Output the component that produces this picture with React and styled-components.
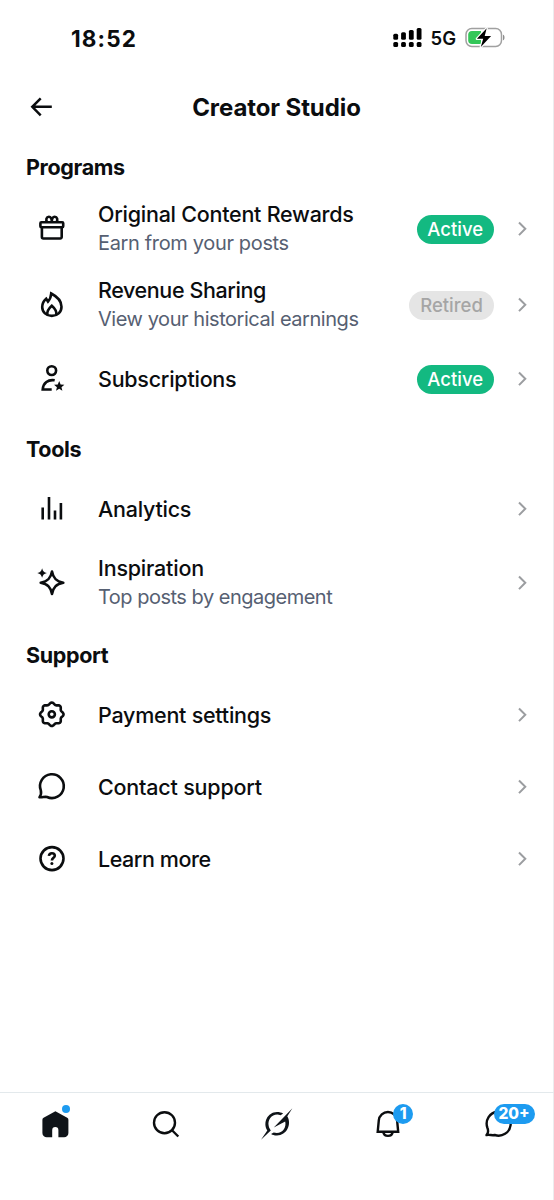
import styled, { createGlobalStyle } from 'styled-components'

const GlobalStyle = createGlobalStyle`
    *{
        box-sizing: border-box;
    }
    body{
        margin: 0;
        background: #fff;
        color: #0b0d0f;
        font-family: Inter, 'Liberation Sans', sans-serif;
    }
    svg{
        display: block;
        overflow: visible;
    }
`

const Screen = styled.div`
    display: flex;
    flex-direction: column;
    width: 554px;
    height: 1200px;
    border-right: 1px solid #ececee;
    background: #fff;
`

const StatusBar = styled.header`
    display: flex;
    align-items: center;
    justify-content: space-between;
    block-size: 76px;
    padding: 0 48px 0 71px;
`

const Clock = styled.span`
    font-size: 22.5px;
    font-weight: 700;
    letter-spacing: 1.1px;
`

const StatusIcons = styled.div`
    display: flex;
    align-items: center;
    gap: 9px;
    font-size: 18.5px;
    font-weight: 600;
`

const TitleBar = styled.div`
    display: grid;
    grid-template-columns: 32px 1fr 32px;
    align-items: center;
    block-size: 62px;
    padding: 0 25px;
    h1{
        margin: 0;
        font-size: 24px;
        font-weight: 700;
        text-align: center;
        letter-spacing: -0.1px;
    }
`

const Content = styled.main`
    flex: 1;
    padding-top: 1px;
`

const SectionTitle = styled.h2`
    margin: 0;
    padding: ${({ $first }) => ($first ? 12 : 18)}px 26px 8px;
    font-size: 21.5px;
    font-weight: 700;
    line-height: 32px;
    letter-spacing: -0.35px;
`

const Row = styled.div`
    display: flex;
    align-items: center;
    block-size: ${({ $tall }) => ($tall ? 76 : 72)}px;
    padding: 0 26px 0 36px;
`

const Labels = styled.div`
    display: flex;
    flex-direction: column;
    flex: 1;
    margin-left: 30px;
    white-space: nowrap;
`

const Label = styled.span`
    font-size: 21.5px;
    font-weight: 500;
    line-height: 29px;
    letter-spacing: ${({ $spacing }) => $spacing ?? -0.25}px;
`

const Detail = styled.span`
    color: #566072;
    font-size: 20px;
    line-height: 29px;
    letter-spacing: ${({ $spacing }) => $spacing ?? -0.45}px;
`

const Pill = styled.span`
    display: flex;
    align-items: center;
    justify-content: center;
    inline-size: ${({ $retired }) => ($retired ? 85 : 77.5)}px;
    block-size: 29px;
    margin-right: 23px;
    border-radius: 15px;
    background: ${({ $retired }) => ($retired ? '#e5e5e5' : '#13b981')};
    color: ${({ $retired }) => ($retired ? '#a5a5a5' : '#fff')};
    font-size: 18.5px;
    font-weight: 500;
`

const NavBar = styled.nav`
    display: grid;
    grid-template-columns: repeat(5, 1fr);
    align-items: start;
    justify-items: center;
    block-size: 108px;
    margin-right: -1px;
    padding-top: 15px;
    border-top: 1px solid #e3e9ec;
`

const NavItem = styled.div`
    position: relative;
`

const Dot = styled.span`
    position: absolute;
    top: -3px;
    left: 23px;
    inline-size: 8px;
    block-size: 8px;
    border-radius: 50%;
    background: #1d9bf0;
`

const Badge = styled.span`
    position: absolute;
    top: -4px;
    left: ${({ $wide }) => ($wide ? 11 : 21.5)}px;
    inline-size: ${({ $wide }) => ($wide ? 41 : 20)}px;
    block-size: 20px;
    border-radius: 10px;
    background: #1d9bf0;
    color: #fff;
    font-size: 15.5px;
    font-weight: 800;
    line-height: 20px;
    text-align: center;
`

const Icon = ({ children, width = 2.6 }) => (
    <svg width="32" height="32" viewBox="0 0 32 32" fill="none" stroke="#0b0d0f" strokeWidth={width}>
        {children}
    </svg>
)

const star = (cx, cy, outer, inner) =>
    Array.from({ length: 10 }, (_, i) => {
        const r = i % 2 ? inner : outer
        const a = (i * Math.PI) / 5
        return `${(cx + r * Math.sin(a)).toFixed(2)},${(cy - r * Math.cos(a)).toFixed(2)}`
    }).join(' ')

// eight soft teeth around the centre
const gear = Array.from({ length: 96 }, (_, i) => {
    const a = (i * Math.PI) / 48
    const r = 10.8 + 0.95 * Math.cos(8 * a)
    return `${(15.8 + r * Math.sin(a)).toFixed(2)},${(15.3 - r * Math.cos(a)).toFixed(2)}`
}).join(' ')

const GiftIcon = () => (
    <Icon>
        <rect x="4.4" y="9.3" width="22.8" height="5" rx="1" />
        <path d="M5.9 14.3v9.7a1.5 1.5 0 0 0 1.5 1.5h16.800a1.5 1.5 0 0 0 1.5-1.500V14.300" />
        <path d="M11.300 9.200C9.300 6.700 10.500 3.800 12.900 3.800c2.100 0 2.900 1.700 2.900 5.400 0-3.700.8-5.400 2.900-5.400 2.400 0 3.600 2.900 1.600 5.400" />
    </Icon>
)

const FlameIcon = () => (
    <Icon>
        <path d="M15.200 4.500c5.800 3 10.300 8 10.300 13.200 0 5.400-4.200 9.200-9.700 9.200s-9.600-3.800-9.600-9c0-3.200 1.500-6 4-8.200l1.800 2.900c1.800-2 3-4.700 3.200-8.100z" />
        <path d="M11.500 26c-1.200-4 1.500-6.700 4.300-9.200 2.900 2.500 5.500 5.200 4.300 9.200" />
    </Icon>
)

const SubscriberIcon = () => (
    <Icon>
        <circle cx="15.700" cy="7.600" r="4.400" />
        <path d="M18.700 17.300c-6.700-1.100-11.500 2.600-12 9.200h9" />
        <polygon points={star(23.200, 23.400, 5.400, 2.400)} fill="#0b0d0f" stroke="none" />
    </Icon>
)

const BarsIcon = () => (
    <Icon>
        <path d="M6.700 14.500v12M13 4.100v22.400M19 17.500v9M24.900 10.100v16.400" />
    </Icon>
)

const SparkleIcon = () => (
    <Icon>
        <path strokeLinejoin="round" d="M16 4.500c1.200 6.900 4.200 10 11.300 11.300C20.200 17.100 17.200 20.100 16 27c-1.200-6.900-4.200-9.900-11.300-11.200C11.800 14.500 14.800 11.400 16 4.500z" />
        <path stroke="none" fill="#0b0d0f" d="M6.100 1.200c.8 3 1.800 4 4.800 4.800-3 .8-4 1.800-4.800 4.800-.8-3-1.800-4-4.800-4.800 3-.8 4-1.800 4.800-4.800z" />
    </Icon>
)

const GearIcon = () => (
    <Icon>
        <polygon points={gear} strokeLinejoin="round" />
        <circle cx="15.800" cy="15.300" r="3.100" />
    </Icon>
)

const ChatIcon = () => (
    <Icon>
        <path strokeLinejoin="round" d="M4.800 19.400A11.900 11.900 0 1 1 11 26c-2.300-.7-5 .8-7.500.2 1.400-1.800 2-4.100 1.300-6.800z" />
    </Icon>
)

const HelpIcon = () => (
    <Icon>
        <circle cx="16" cy="15.600" r="11.500" />
        <path d="M12.900 12.900c.2-1.900 1.300-2.700 3-2.700s2.900.9 2.900 2.500c0 2.200-2.900 2.100-2.900 4.900" />
        <circle cx="15.900" cy="20.500" r="1.500" fill="#0b0d0f" stroke="none" />
    </Icon>
)

const HomeIcon = () => (
    <Icon>
        <path stroke="none" fill="#0f1419" d="M16.400 3.300 28.200 9.700a2.300 2.300 0 0 1 1.200 2V25a4.300 4.300 0 0 1-4.300 4.300h-5.700v-7.100a3.100 3.100 0 0 0-6.200 0v7.100H7.700A4.300 4.300 0 0 1 3.400 25V11.700a2.300 2.300 0 0 1 1.200-2z" />
    </Icon>
)

const SearchIcon = () => (
    <Icon width={2.4}>
        <circle cx="14.500" cy="14.700" r="10.500" />
        <path d="m21.800 22 6.500 6.500" />
    </Icon>
)

const GrokIcon = () => (
    <Icon>
        <g stroke="none" fill="#0f1419">
            <path d="M0 31.800 6.300 22.600C1.500 14.700 6.500 4.200 16 4c2.400 0 4.400.5 6.100 1.500L19.600 7.200C12 4.600 6.200 11.200 7.700 18c.4 2 1.400 3.300 2.100 4.500z" />
            <path d="M31.400.2 26.300 8.300c4.700 8-.5 19-10.300 19.200-2.300.1-4.200-.5-5.900-1.500l2.600-1.600c7.500 2.300 13.100-4.100 11.500-11L12.800 19.600z" />
        </g>
    </Icon>
)

const BellIcon = () => (
    <Icon width={2.4}>
        <path d="M5.700 23.800 6.800 12.300a9.200 9.200 0 0 1 18.300 0l1.100 11.500z" />
        <path d="M11.300 24c.4 2.600 2.100 3.900 4.700 3.900s4.300-1.300 4.700-3.900" />
    </Icon>
)

const MessageIcon = () => (
    <Icon width={2.4}>
        <path strokeLinejoin="round" d="M4.300 19.500A12 12 0 1 1 11.700 27c-2.700.700-5.400-.7-8.200.1 1.900-2 1.900-4.900.8-7.600z" />
    </Icon>
)

const Chevron = () => (
    <svg width="10" height="16" viewBox="0 0 10 16" fill="none" stroke="#9b9da0" strokeWidth="2">
        <path d="m2 1.500 6.300 6.300L2 14.100" />
    </svg>
)

const BackArrow = () => (
    <svg width="32" height="32" viewBox="0 0 32 32" fill="none" stroke="#0b0d0f" strokeWidth="2.500">
        <path d="M26.800 15.800H7.500M15.700 7.300 7.300 15.800l8.400 8.500" />
    </svg>
)

const Signal = () => (
    <svg width="29" height="20" viewBox="0 0 29 20" fill="#000">
        {[5.8, 4.2, 2, 0].map((top, i) => (
            <g key={top}>
                <rect x={0.3 + i * 7.8} y={top} width="4.800" height={11.8 - top} rx="1.500" />
                <rect x={0.3 + i * 7.8} y="13.900" width="4.800" height="5" rx="1.500" />
            </g>
        ))}
    </svg>
)

const Battery = () => (
    <svg width="40" height="20" viewBox="0 0 40 20">
        <rect x="1" y=".6" width="35.500" height="17.800" rx="5.800" fill="none" stroke="#a0a0a0" strokeWidth="1.500" />
        <path d="M38 6.700c2 .5 2 5.100 0 5.600z" fill="#8e8e8e" />
        <path d="M7 2.900h9v13.200H7A3.800 3.800 0 0 1 3.200 12.300V6.700A3.800 3.800 0 0 1 7 2.900z" fill="#34c759" />
        <path d="M21.700.3 11.900 10.800h6.300L15.800 19l10.300-10.900h-6.400z" fill="#000" stroke="#fff" strokeWidth="2.400" paintOrder="stroke" strokeLinejoin="round" />
    </svg>
)

const sections = [
    {
        title: 'Programs',
        rows: [
            { icon: GiftIcon, label: 'Original Content Rewards', detail: 'Earn from your posts', status: 'Active', detailSpacing: -0.35 },
            { icon: FlameIcon, label: 'Revenue Sharing', detail: 'View your historical earnings', status: 'Retired', spacing: -0.4 },
            { icon: SubscriberIcon, label: 'Subscriptions', status: 'Active' }
        ]
    },
    {
        title: 'Tools',
        rows: [
            { icon: BarsIcon, label: 'Analytics' },
            { icon: SparkleIcon, label: 'Inspiration', detail: 'Top posts by engagement', spacing: -0.2, detailSpacing: -0.5 }
        ]
    },
    {
        title: 'Support',
        rows: [
            { icon: GearIcon, label: 'Payment settings' },
            { icon: ChatIcon, label: 'Contact support', spacing: -0.2 },
            { icon: HelpIcon, label: 'Learn more', spacing: -0.45 }
        ]
    }
]

const navItems = [
    { icon: HomeIcon, dot: true },
    { icon: SearchIcon },
    { icon: GrokIcon },
    { icon: BellIcon, badge: '1' },
    { icon: MessageIcon, badge: '20+' }
]

function App() {
    return (
        <Screen>
            <GlobalStyle />
            <StatusBar>
                <Clock>18:52</Clock>
                <StatusIcons>
                    <Signal />
                    <span>5G</span>
                    <Battery />
                </StatusIcons>
            </StatusBar>
            <TitleBar>
                <BackArrow />
                <h1>Creator Studio</h1>
            </TitleBar>
            <Content>
                {sections.map(({ title, rows }, i) => (
                    <section key={title}>
                        <SectionTitle $first={i === 0}>{title}</SectionTitle>
                        {rows.map(({ icon: RowIcon, label, detail, status, spacing, detailSpacing }) => (
                            <Row key={label} $tall={Boolean(detail)}>
                                <RowIcon />
                                <Labels>
                                    <Label $spacing={spacing}>{label}</Label>
                                    {detail && <Detail $spacing={detailSpacing}>{detail}</Detail>}
                                </Labels>
                                {status && <Pill $retired={status === 'Retired'}>{status}</Pill>}
                                <Chevron />
                            </Row>
                        ))}
                    </section>
                ))}
            </Content>
            <NavBar>
                {navItems.map(({ icon: ItemIcon, dot, badge }, i) => (
                    <NavItem key={i}>
                        <ItemIcon />
                        {dot && <Dot />}
                        {badge && <Badge $wide={badge.length > 1}>{badge}</Badge>}
                    </NavItem>
                ))}
            </NavBar>
        </Screen>
    )
}

export default App
